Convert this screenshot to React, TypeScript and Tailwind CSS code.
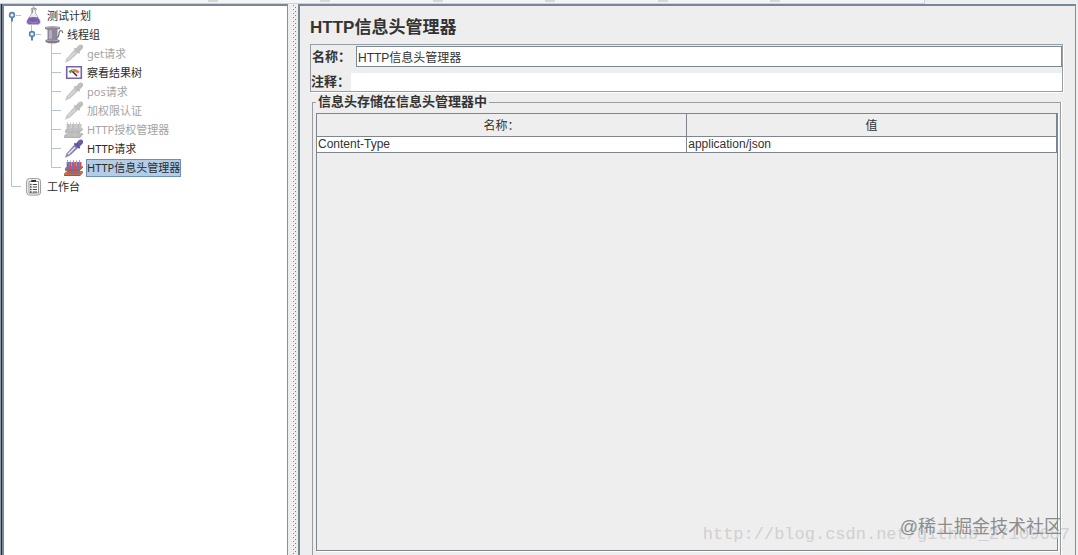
import React, { useState } from "react";

type Guide = "open" | "openEnd" | "line" | "tee" | "end" | "blank";

function GuideCell({ kind }: { kind: Guide }) {
  const d: Record<Guide, string> = {
    open: "M7.5 12V19M12 9.5H17",
    openEnd: "M7.5 0V7M12 9.5H17",
    line: "M7.5 0V19",
    tee: "M7.5 0V19M8 9.5H17",
    end: "M7.5 0V9.5H17",
    blank: "",
  };
  const handle = kind === "open" || kind === "openEnd";
  return (
    <svg width="20" height="19" viewBox="0 0 20 19" className="shrink-0" aria-hidden="true">
      <path d={d[kind]} fill="none" stroke="#b3c3d4" />
      {handle && (
        <>
          <path d="M8 11V15.5" stroke="#5a82b0" strokeWidth="2" />
          <circle cx="8" cy="9" r="2.4" fill="#eaf3fb" stroke="#5a82b0" strokeWidth="1.6" />
        </>
      )}
    </svg>
  );
}

function Icon({ children }: { children: React.ReactNode }) {
  return (
    <svg width="20" height="19" viewBox="0 0 20 19" className="shrink-0" aria-hidden="true">
      {children}
    </svg>
  );
}

function Flask() {
  return (
    <Icon>
      <path d="M8 3.5V7L3.2 14.5Q2 18 5 18.5H14Q17 18 15.8 14.5L11.5 7V3.5Z" fill="#eceaf0" stroke="#b9b6be" />
      <path d="M5 11.5Q9.5 10.3 14 11.5L15.8 14.8Q16.6 17.6 14 18H5Q2.4 17.6 3.2 14.8Z" fill="#7c5fae" />
      <path d="M5 15.5Q9.5 18.6 14 15.8" fill="none" stroke="#a28dcb" />
      <path d="M7 3.5Q7 2 9.7 2Q12.5 2 12.5 3.5M8.2 4V7.5" fill="none" stroke="#77737f" />
      <path d="M9.5 0V2" stroke="#c0bac8" />
      <path d="M9.5 6V9" stroke="#fff" strokeWidth="1.5" />
    </Icon>
  );
}

function Spool() {
  return (
    <Icon>
      <path d="M3.5 4H13.5V15H3.5Z" fill="#8f889c" />
      <path d="M5 5H8V15H5Z" fill="#b4adbd" />
      <path d="M1 2Q8 .5 16 2V4Q8 6.5 1 4Z" fill="#8e8794" />
      <path d="M2 2.5Q8 1.5 15 2.5" fill="none" stroke="#b4adb9" />
      <path d="M1.5 15Q8 12.5 15.5 15V17Q8 20 1.5 17Z" fill="#827a8c" />
      <path d="M3 15.5Q8 14.5 14 15.5" fill="none" stroke="#b5adba" />
      <path d="M12.5 13Q14.8 12 15 9Q15 5.5 17 5.5Q18.5 5.6 18.7 8" fill="none" stroke="#706c76" strokeWidth="1.2" />
    </Icon>
  );
}

function Pipette({ active = false }: { active?: boolean }) {
  return (
    <Icon>
      <path d="M1 18.8L2.5 14.5L10.5 5.5L14.5 8.5L6 16.5Z" fill={active ? "#8580b5" : "#c6c6c6"} />
      <path d="M4 15.4L11 8.4" stroke={active ? "#e4e2f2" : "#d8d8d8"} strokeWidth="1.5" />
      <path d="M10.3 4.3L15.7 9.2" stroke={active ? "#54498c" : "#bababa"} strokeWidth="1.8" />
      <path d="M11.5 5L14.5 1.5Q17 -.2 18.5 1.3Q19.8 3.2 18.2 5L15 8.2Z" fill={active ? "#6558a4" : "#bdbdbd"} />
      <path d="M15 3.2L16.5 2.3" stroke={active ? "#8c82c0" : "#cdcdcd"} />
    </Icon>
  );
}

function Gauge() {
  return (
    <Icon>
      <path d="M2.7 3.7H17.3V15.3H2.7Z" fill="#fff" stroke="#7565a6" strokeWidth="1.6" />
      <path d="M4.5 8.5Q6 6.8 8 6.3L9 8.8Q7.5 9 6.5 10.5Z" fill="#5b9b69" />
      <path d="M8 6.3Q12.5 5 15.8 8.8L13.6 10.4Q11.5 8.3 9 8.8Z" fill="#ef7557" />
      <path d="M8.5 8.5L13 13" stroke="#3f3035" strokeWidth="1.6" />
    </Icon>
  );
}

function Shelf({ active = false }: { active?: boolean }) {
  const wood = active ? "#bd7148" : "#bcbcbc";
  const blue = active ? "#6574bd" : "#bebebe";
  const red = active ? "#dd4c55" : "#c4c4c4";
  return (
    <Icon>
      <path d="M1 10L4 8H19L16 12.5H1Z" fill={wood} />
      <path d="M0 15.5L3 13H19L16 18H0Z" fill={wood} />
      <path d="M3.8 4V11M8.8 4V11M13.8 4V11" stroke={blue} strokeWidth="2.4" />
      <path d="M6.3 4V12M11.3 4V12M16.3 4V10" stroke={red} strokeWidth="2.4" />
      <path d="M5 11V16M11 11V16" stroke={red} strokeWidth="3" />
      <path d="M8 11V16M14 11V16" stroke={blue} strokeWidth="3" />
      <path d="M3.5 2V4.5M6.5 2.5V4.5M9.5 2V4.5M12.5 2.5V4.5M15.5 2V4.5" stroke={active ? "#a8a5bd" : "#cbcbcb"} />
      <path d="M1 12.2H16L19 9M0 17.5H16L19 14" stroke={active ? "#9a5a3c" : "#b2b2b2"} fill="none" />
    </Icon>
  );
}

function Clipboard() {
  return (
    <Icon>
      <rect x="2.6" y="1.6" width="14" height="16.5" rx="3" fill="#f3f3f3" stroke="#999" />
      <path d="M5 4.5H14.5V16H5Z" fill="#fff" stroke="#777" strokeWidth=".8" />
      <path d="M7.2 3H12V5H7.2Z" fill="#333" />
      <path d="M8.7 7.5H13M8.7 10H13M8.7 12.5H13M8.7 15H13" stroke="#444" strokeWidth="1.2" />
      <path d="M6.2 7.5H7.5M6.2 10H7.5M6.2 12.5H7.5M6.2 15H7.5" stroke="#222" strokeWidth="1.5" />
    </Icon>
  );
}

type Node = { label: string; guides: Guide[]; icon: React.ReactNode; disabled?: boolean; selected?: boolean };

const nodes: Node[] = [
  { label: "测试计划", guides: ["open"], icon: <Flask /> },
  { label: "线程组", guides: ["line", "openEnd"], icon: <Spool /> },
  { label: "get请求", guides: ["line", "blank", "tee"], icon: <Pipette />, disabled: true },
  { label: "察看结果树", guides: ["line", "blank", "tee"], icon: <Gauge /> },
  { label: "pos请求", guides: ["line", "blank", "tee"], icon: <Pipette />, disabled: true },
  { label: "加权限认证", guides: ["line", "blank", "tee"], icon: <Pipette />, disabled: true },
  { label: "HTTP授权管理器", guides: ["line", "blank", "tee"], icon: <Shelf />, disabled: true },
  { label: "HTTP请求", guides: ["line", "blank", "tee"], icon: <Pipette active /> },
  { label: "HTTP信息头管理器", guides: ["line", "blank", "end"], icon: <Shelf active />, selected: true },
  { label: "工作台", guides: ["end"], icon: <Clipboard /> },
];

function TreeRow({ node }: { node: Node }) {
  const tone = node.disabled ? "text-[#a3a3a3]" : "text-[#2b2b2b]";
  const box = node.selected ? "border-[#6b8fb5] bg-[#b4cde6]" : "border-transparent";
  return (
    <li role="treeitem" aria-level={node.guides.length} aria-selected={!!node.selected} className="flex h-[19px] items-center">
      {node.guides.map((g, i) => (
        <GuideCell key={i} kind={g} />
      ))}
      {node.icon}
      <button type="button" className={`ml-0.5 h-[18px] border text-[11px] leading-4 whitespace-nowrap ${tone} ${box}`}>
        {node.label}
      </button>
    </li>
  );
}

function Divider() {
  return (
    <div role="separator" aria-orientation="vertical" className="flex w-2.5 shrink-0 justify-center bg-[#eeeeee]">
      <svg className="h-full w-1.5" aria-hidden="true">
        <defs>
          <pattern id="grip" width="6" height="4" patternUnits="userSpaceOnUse">
            <path d="M2 0h1v1h-1zM4 2h1v1h-1z" fill="#fff" />
            <path d="M3 1h1v1h-1zM5 3h1v1h-1z" fill="#7c8288" />
          </pattern>
        </defs>
        <rect width="6" height="100%" fill="url(#grip)" />
      </svg>
    </div>
  );
}

export default function App() {
  const [name, setName] = useState("HTTP信息头管理器");
  const [comment, setComment] = useState("");
  return (
    <div className="relative flex h-screen flex-col overflow-hidden bg-[#eeeeee] font-['Liberation_Sans','Noto_Sans_CJK_SC',sans-serif] text-xs text-[#333333]">
      <div className="flex h-1 shrink-0 bg-[#eceef1]">
        <div className="flex w-[925px] justify-between border-r border-b border-[#cfd3d8] bg-[#f4f5f6] pr-36 pl-[208px]">
          <span className="h-0.5 w-2.5 bg-[#d5d7da]" />
          <span className="h-0.5 w-2.5 bg-[#d5d7da]" />
          <span className="h-0.5 w-2.5 bg-[#d5d7da]" />
          <span className="h-0.5 w-2.5 bg-[#d5d7da]" />
          <span className="h-0.5 w-2.5 bg-[#d5d7da]" />
          <span className="h-0.5 w-2.5 bg-[#d5d7da]" />
        </div>
      </div>
      <div className="flex min-h-0 flex-1">
        <div className="w-0.5 shrink-0 border-r border-[#1f2b40] bg-[#9298a3]" />
        <nav className="w-[286px] shrink-0 border-t-2 border-r border-l-2 border-t-[#76879a] border-r-[#8a8f94] border-l-[#76879a] bg-white font-['Noto_Sans','Noto_Sans_CJK_SC',sans-serif]">
          <ul role="tree" aria-label="测试计划">
            {nodes.map((n) => (
              <TreeRow key={n.label} node={n} />
            ))}
          </ul>
        </nav>
        <Divider />
        <main className="mr-0.5 flex min-w-0 flex-1 flex-col border-t-2 border-r border-l-2 border-t-[#76879a] border-r-[#8a8f94] border-l-[#76879a] pr-3 pl-2.5">
          <h1 className="mt-2 h-[30px] text-[17px] leading-7 font-bold">HTTP信息头管理器</h1>
          <section className="border border-[#989da2] shadow-[1px_1px_0_#fff]">
            <div className="flex h-[22px] items-center pt-px">
              <label htmlFor="name" className="w-[45px] shrink-0 pl-px text-[13px] font-bold">名称：</label>
              <input
                id="name"
                value={name}
                onChange={(e) => setName(e.target.value)}
                className="h-[21px] min-w-0 flex-1 border border-[#7a8a99] bg-white px-px text-xs outline-none"
              />
            </div>
            <div className="mt-1.5 flex h-[18px] items-center">
              <label htmlFor="comment" className="w-10 shrink-0 text-[13px] font-bold">注释：</label>
              <input
                id="comment"
                value={comment}
                onChange={(e) => setComment(e.target.value)}
                className="h-[18px] min-w-0 flex-1 bg-white px-px text-xs outline-none"
              />
            </div>
          </section>
          <fieldset className="mx-0.5 mt-0.5 flex min-h-0 min-w-0 flex-1 flex-col border border-b-0 border-[#989da2] pr-0.5 pb-1 pl-[3px] shadow-[1px_0_0_#fff]">
            <legend className="px-0.5 text-[13px] leading-4 font-bold">信息头存储在信息头管理器中</legend>
            <div className="mt-[3px] h-full border border-[#7f868d] shadow-[1px_1px_0_#fff]">
              <table className="w-full table-fixed border-collapse">
                <thead>
                  <tr className="h-[22px] border-b border-[#7f868d]">
                    <th className="border-r border-[#7f868d] p-0 pt-0.5 font-normal">名称：</th>
                    <th className="border-r border-[#76879a] p-0 pt-0.5 font-normal">值</th>
                  </tr>
                </thead>
                <tbody>
                  <tr className="h-4 border-b border-[#7f868d] bg-white">
                    <td className="border-r border-[#7f868d] p-0 pl-px leading-[15px]">Content-Type</td>
                    <td className="border-r border-[#76879a] p-0 pl-px leading-[15px]">application/json</td>
                  </tr>
                </tbody>
              </table>
            </div>
          </fieldset>
        </main>
      </div>
      <div className="pointer-events-none absolute right-2 bottom-2 font-['Liberation_Mono',monospace] text-[17px] leading-6 text-[#d0d0d0]">
        http://blog.csdn.net/github_27109687
      </div>
      <div className="pointer-events-none absolute right-4 bottom-3.5 text-lg leading-7 text-[#8c8c8c]">
        @稀土掘金技术社区
      </div>
    </div>
  );
}
